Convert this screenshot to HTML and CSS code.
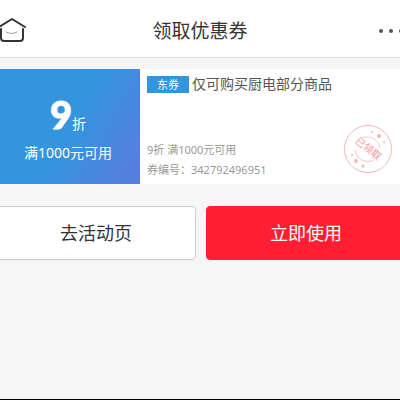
FILE: index.html
```html
<!DOCTYPE html>
<html lang="zh-CN">
<head>
    <meta charset="UTF-8">
    <meta name="viewport" content="width=device-width, initial-scale=1.0">
    <title>领取优惠券</title>
    <link rel="stylesheet" href="styles.css">
</head>
<body>
    <header class="header">
        <a class="home" href="#" aria-label="首页">
            <svg width="28" height="28" viewBox="0 0 28 28" fill="none" stroke-linecap="round" stroke-linejoin="round">
                <path d="M1 10 L14 2 L27 10" stroke="#333" stroke-width="2"/>
                <path d="M3 12 V21 Q3 24 6 24 H22 Q25 24 25 21 V12" stroke="#333" stroke-width="2"/>
                <path d="M8 15 Q14 18 19 15" stroke="#999" stroke-width="1"/>
            </svg>
        </a>
        <h1>领取优惠券</h1>
        <button class="more" type="button" aria-label="更多">
            <svg width="24" height="6" viewBox="0 0 24 6" fill="#555">
                <circle cx="3" cy="3" r="2"/>
                <circle cx="13" cy="3" r="2"/>
                <circle cx="23" cy="3" r="2"/>
            </svg>
        </button>
    </header>

    <main>
        <section class="coupon">
            <div class="coupon-value">
                <p class="discount"><strong>9</strong>折</p>
                <p class="limit">满1000元可用</p>
            </div>
            <div class="coupon-info">
                <h2><span class="tag">东券</span>仅可购买厨电部分商品</h2>
                <div class="coupon-detail">
                    <p>9折 满1000元可用</p>
                    <p>券编号：342792496951</p>
                </div>
            </div>
            <svg class="stamp" width="50" height="50" viewBox="0 0 50 50" fill="none" stroke="#edb9bb">
                <circle cx="25" cy="25" r="23.5"/>
                <path d="M19 14 A13 13 0 0 1 37 24 M31 36 A13 13 0 0 1 12 26" stroke-width="0.8"/>
                <g fill="#edb9bb" stroke="none">
                    <circle cx="29" cy="8" r="1"/>
                    <circle cx="36" cy="12" r="2"/>
                    <circle cx="41" cy="18" r="1"/>
                    <circle cx="9" cy="31" r="1"/>
                    <circle cx="13" cy="37" r="2"/>
                    <circle cx="20" cy="42" r="1.5"/>
                </g>
                <text x="25" y="28" transform="rotate(38 25 25)" text-anchor="middle">已领取</text>
            </svg>
        </section>

        <div class="actions">
            <button class="btn" type="button">去活动页</button>
            <button class="btn btn-primary" type="button">立即使用</button>
        </div>
    </main>
</body>
</html>
```
FILE: styles.css
```css
* {
    box-sizing: border-box;
}

body {
    margin: 0;
    min-height: 100vh;
    background: #f6f6f6;
    border-bottom: 1px solid #000;
    font-family: "Noto Sans", "Noto Sans CJK SC", sans-serif;
    color: #333;
    overflow: hidden;
}

h1, h2, p {
    margin: 0;
    font-weight: normal;
}

.header {
    display: grid;
    grid-template-columns: 24px 1fr 24px;
    align-items: center;
    height: 58px;
    padding-top: 4px;
    background: #fff;
    border-bottom: 1px solid #ddd;
    /* the bar runs slightly past both screen edges */
    margin: 0 -2px;
}

.header h1 {
    font-size: 19px;
    line-height: 28px;
    text-align: center;
}

.home, .more {
    display: flex;
}

.home svg {
    flex-shrink: 0;
}

.more {
    padding: 0;
    border: none;
    background: none;
}

.coupon {
    display: flex;
    align-items: stretch;
    min-height: 115px;
    margin-top: 11px;
    background: #fff;
}

.coupon-value {
    display: flex;
    flex-direction: column;
    justify-content: center;
    width: 35%;
    padding: 4px 4px 0 0;
    background: linear-gradient(120deg, #3495df 50%, #5480dd 90%);
    color: #fff;
    text-align: center;
}

.discount {
    font-size: 14px;
    line-height: 38px;
}

.discount strong {
    font-family: Lato, sans-serif;
    font-size: 38px;
    font-weight: 900;
    -webkit-text-stroke: 1px #fff;
}

.limit {
    font-size: 14px;
    line-height: 20px;
}

.coupon-info {
    display: flex;
    flex: 1;
    flex-direction: column;
    justify-content: space-between;
    padding: 5px 0 4px 7px;
}

.coupon-info h2 {
    display: flex;
    align-items: center;
    gap: 3px;
    color: #555;
    font-size: 14px;
    line-height: 20px;
}

.tag {
    width: 42px;
    background: #3495df;
    color: #fff;
    font-size: 11px;
    line-height: 17px;
    text-align: center;
}

.coupon-detail {
    color: #999;
    font-size: 11px;
    line-height: 20px;
}

.stamp {
    align-self: flex-end;
    margin: 0 7px 10px 0;
}

.stamp text {
    fill: #e79a9d;
    stroke: none;
    font-size: 10px;
}

.actions {
    display: grid;
    grid-template-columns: 1fr 1fr;
    gap: 10px;
    margin: 22px -6px 0 -4px;
}

.btn {
    height: 54px;
    padding-bottom: 4px;
    border: 1px solid #ccc;
    border-radius: 4px;
    background: #fff;
    color: #333;
    font-family: inherit;
    font-size: 18px;
    cursor: pointer;
}

.btn-primary {
    border-color: #ff1e32;
    background: #ff1e32;
    color: #fff;
}
```
